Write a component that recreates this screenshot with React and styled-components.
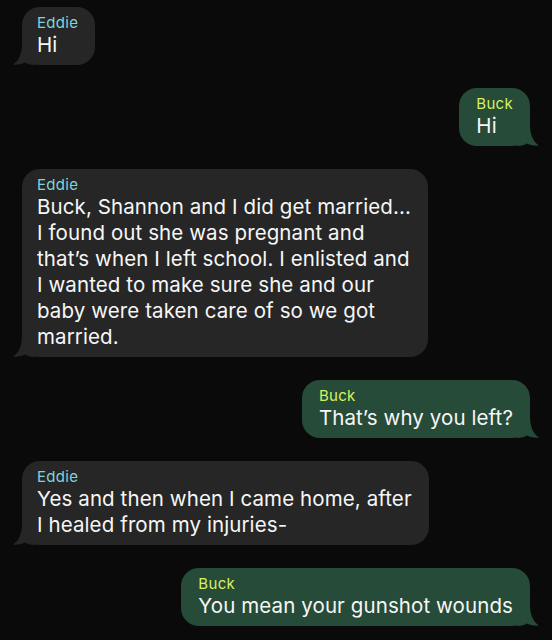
import React from "react";
import styled, { createGlobalStyle } from "styled-components";

const GlobalStyle = createGlobalStyle`
  html, body {
    margin: 0;
    padding: 0;
    background: #0a0a0a;
  }
  body {
    font-family: Inter, "Noto Sans", "Liberation Sans", sans-serif;
    -webkit-font-smoothing: antialiased;
  }
`;

const Thread = styled.div`
  display: flex;
  flex-direction: column;
  gap: 23px;
  padding: 7px 22px;
  width: 552px;
  height: 640px;
  box-sizing: border-box;
  background: #0a0a0a;
  overflow: hidden;
`;

const Row = styled.div`
  display: flex;
  justify-content: ${(p) => (p.$mine ? "flex-end" : "flex-start")};
`;

const Bubble = styled.div`
  position: relative;
  box-sizing: border-box;
  max-width: 430px;
  padding: ${(p) => (p.$mine ? "7px 17px 7px 17px" : "7px 17px 7px 15px")};
  border-radius: 18px;
  background: ${(p) => (p.$mine ? "#264b38" : "#262626")};
`;

const Sender = styled.div`
  font-size: 15px;
  line-height: 18px;
  letter-spacing: 0.3px;
  color: ${(p) => (p.$mine ? "#d6f25e" : "#7fd4df")};
`;

const Text = styled.div`
  font-size: 20.5px;
  line-height: 26px;
  letter-spacing: 0.1px;
  color: #f6f6f6;
  white-space: pre-wrap;
`;

const TailSvg = styled.svg`
  position: absolute;
  bottom: 0;
  width: 22px;
  height: 22px;
  ${(p) =>
    p.$mine
      ? "right: -9px; transform: scaleX(-1);"
      : "left: -9px;"}
`;

function Tail({ mine }) {
  return (
    <TailSvg $mine={mine} viewBox="0 0 22 22" aria-hidden="true">
      <path
        d="M9 0 C9 10 6.5 17 0 21.6 C5 22 9.5 21 12.5 19.6 C15 21.4 18.5 22 22 22 L22 0 Z"
        fill={mine ? "#264b38" : "#262626"}
      />
    </TailSvg>
  );
}

const messages = [
  { mine: false, who: "Eddie", text: "Hi" },
  { mine: true, who: "Buck", text: "Hi" },
  {
    mine: false,
    who: "Eddie",
    text:
      "Buck, Shannon and I did get married...\nI found out she was pregnant and\nthat\u2019s when I left school. I enlisted and\nI wanted to make sure she and our\nbaby were taken care of so we got\nmarried.",
  },
  { mine: true, who: "Buck", text: "That\u2019s why you left?" },
  {
    mine: false,
    who: "Eddie",
    text: "Yes and then when I came home, after\nI healed from my injuries-",
  },
  { mine: true, who: "Buck", text: "You mean your gunshot wounds" },
];

export default function App() {
  return (
    <>
      <GlobalStyle />
      <Thread>
        {messages.map((m, i) => (
          <Row key={i} $mine={m.mine}>
            <Bubble $mine={m.mine}>
              <Tail mine={m.mine} />
              <Sender $mine={m.mine}>{m.who}</Sender>
              <Text>{m.text}</Text>
            </Bubble>
          </Row>
        ))}
      </Thread>
    </>
  );
}
